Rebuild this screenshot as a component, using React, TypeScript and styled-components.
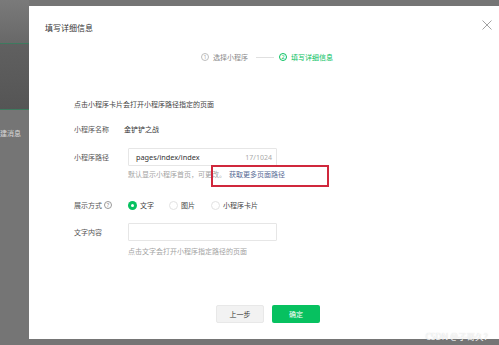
import React from "react";
import styled, { createGlobalStyle } from "styled-components";

const Global = createGlobalStyle`
  html, body {
    margin: 0;
    padding: 0;
    width: 499px;
    height: 345px;
    overflow: hidden;
    background: #757575;
    font-family: "Noto Sans CJK SC", "Noto Sans", sans-serif;
  }
  * { box-sizing: border-box; }
`;

const Page = styled.div`
  display: flex;
  width: 499px;
  height: 345px;
  position: relative;
`;

const Sidebar = styled.div`
  width: 29px;
  display: flex;
  flex-direction: column;
  flex-shrink: 0;
`;

const SideTop = styled.div`
  height: 43px;
  background: linear-gradient(#7a7a7a, #686868);
`;

const SideLine = styled.div`
  height: 1px;
  background: #3e7a5f;
`;

const SideNav = styled.div`
  height: 65px;
  background: linear-gradient(#606060, #555555);
`;

const SideItem = styled.div`
  padding-top: 18px;
  font-size: 7px;
  line-height: 10px;
  color: #d8d8d8;
  white-space: nowrap;
  overflow: hidden;
`;

const Modal = styled.div`
  flex: 1;
  margin-top: 6px;
  height: 333px;
  background: #ffffff;
  display: flex;
  flex-direction: column;
`;

const Header = styled.div`
  display: flex;
  justify-content: space-between;
  align-items: flex-start;
  padding: 16px 7px 0 16px;
  height: 28px;
`;

const Title = styled.div`
  font-size: 8px;
  line-height: 12px;
  color: #333;
`;

const Close = styled.svg`
  width: 10px;
  height: 10px;
  margin-top: -2px;
`;

const Steps = styled.div`
  display: flex;
  align-items: center;
  margin: 18px 0 0 172px;
  height: 10px;
`;

const Step = styled.div<{ $active?: boolean }>`
  display: flex;
  align-items: center;
  gap: 4px;
  font-size: 7px;
  line-height: 10px;
  color: ${(p) => (p.$active ? "#07c160" : "#8a8a8a")};
`;

const StepNum = styled.span<{ $active?: boolean }>`
  width: 8px;
  height: 8px;
  border-radius: 50%;
  border: 0.8px solid ${(p) => (p.$active ? "#07c160" : "#bdbdbd")};
  color: ${(p) => (p.$active ? "#07c160" : "#aaa")};
  font-size: 5.5px;
  line-height: 7px;
  text-align: center;
  font-family: "Noto Sans", sans-serif;
`;

const StepLine = styled.span`
  width: 18px;
  height: 1px;
  background: #e0e0e0;
  margin: 0 5px 0 8px;
`;

const Body = styled.div`
  display: flex;
  flex-direction: column;
  padding-left: 45px;
`;

const Intro = styled.div`
  margin-top: 37px;
  font-size: 7px;
  line-height: 10px;
  color: #444;
`;

const Row = styled.div<{ $mt: number }>`
  display: flex;
  align-items: center;
  margin-top: ${(p) => p.$mt}px;
`;

const Label = styled.div<{ $w: number }>`
  width: ${(p) => p.$w}px;
  flex-shrink: 0;
  display: flex;
  align-items: center;
  gap: 2px;
  font-size: 7px;
  line-height: 10px;
  color: #555;
`;

const Value = styled.div`
  font-size: 7px;
  line-height: 10px;
  color: #333;
`;

const Help = styled.span`
  width: 8px;
  height: 8px;
  border-radius: 50%;
  border: 0.8px solid #999;
  color: #888;
  font-size: 5.5px;
  line-height: 7px;
  text-align: center;
  font-family: "Noto Sans", sans-serif;
`;

const Input = styled.div`
  width: 149px;
  height: 18px;
  border: 1px solid #e6e6e6;
  border-radius: 1px;
  display: flex;
  align-items: center;
  justify-content: space-between;
  padding: 0 4px 0 7px;
  font-family: "Noto Sans", sans-serif;
`;

const InputText = styled.span`
  font-size: 7.3px;
  color: #333;
`;

const Counter = styled.span`
  font-size: 7px;
  color: #aaa;
`;

const Hint = styled.div<{ $mt: number }>`
  position: relative;
  margin: ${(p) => p.$mt}px 0 0 54px;
  font-size: 7px;
  line-height: 10px;
  color: #a3a3a3;
  white-space: nowrap;
`;

const Link = styled.span`
  color: #576b95;
  margin-left: 3px;
`;

const Annotation = styled.div`
  position: absolute;
  left: 83px;
  top: -4px;
  width: 118px;
  height: 22px;
  border: 2px solid rgb(208, 40, 60);
`;

const Radios = styled.div`
  display: flex;
  align-items: center;
`;

const RadioItem = styled.div<{ $gap: number }>`
  display: flex;
  align-items: center;
  gap: 3px;
  margin-right: ${(p) => p.$gap}px;
  font-size: 7px;
  line-height: 10px;
  color: #444;
`;

const RadioDot = styled.span<{ $on?: boolean }>`
  width: 9px;
  height: 9px;
  border-radius: 50%;
  display: flex;
  align-items: center;
  justify-content: center;
  background: ${(p) => (p.$on ? "#07c160" : "#fff")};
  border: ${(p) => (p.$on ? "none" : "0.8px solid #e2e2e2")};
  &::after {
    content: "";
    width: 3px;
    height: 3px;
    border-radius: 50%;
    background: #fff;
    display: ${(p) => (p.$on ? "block" : "none")};
  }
`;

const Footer = styled.div`
  display: flex;
  gap: 8px;
  margin: 49px 0 0 142px;
`;

const Button = styled.div<{ $primary?: boolean }>`
  width: 48px;
  height: 18px;
  border-radius: 2px;
  display: flex;
  align-items: center;
  justify-content: center;
  font-size: 7px;
  background: ${(p) => (p.$primary ? "#07c160" : "#f2f2f2")};
  color: ${(p) => (p.$primary ? "#fff" : "#333")};
  border: ${(p) => (p.$primary ? "none" : "0.8px solid #e8e8e8")};
`;

const Watermark = styled.div`
  position: absolute;
  right: 7px;
  bottom: 3px;
  font-size: 8.5px;
  line-height: 10px;
  color: rgba(255, 255, 255, 0.9);
  text-shadow: 0 0 1px rgba(150, 150, 150, 0.5);
  font-family: "Noto Sans", "Noto Sans CJK SC", sans-serif;
`;

export default function App() {
  return (
    <>
      <Global />
      <Page>
        <Sidebar>
          <SideTop />
          <SideLine />
          <SideNav />
          <SideLine />
          <SideItem>建消息</SideItem>
        </Sidebar>
        <Modal>
          <Header>
            <Title>填写详细信息</Title>
            <Close viewBox="0 0 10 10">
              <path d="M0.5 0.5 L9.5 9.5 M9.5 0.5 L0.5 9.5" stroke="#8a8a8a" strokeWidth="0.8" fill="none" />
            </Close>
          </Header>
          <Steps>
            <Step>
              <StepNum>1</StepNum>
              选择小程序
            </Step>
            <StepLine />
            <Step $active>
              <StepNum $active>2</StepNum>
              填写详细信息
            </Step>
          </Steps>
          <Body>
            <Intro>点击小程序卡片会打开小程序路径指定的页面</Intro>
            <Row $mt={15}>
              <Label $w={50}>小程序名称</Label>
              <Value>金铲铲之战</Value>
            </Row>
            <Row $mt={14}>
              <Label $w={54}>小程序路径</Label>
              <Input>
                <InputText>pages/index/index</InputText>
                <Counter>17/1024</Counter>
              </Input>
            </Row>
            <Hint $mt={3}>
              默认显示小程序首页，可更改。<Link>获取更多页面路径</Link>
              <Annotation />
            </Hint>
            <Row $mt={21}>
              <Label $w={54}>
                展示方式<Help>?</Help>
              </Label>
              <Radios>
                <RadioItem $gap={15}>
                  <RadioDot $on />
                  文字
                </RadioItem>
                <RadioItem $gap={16}>
                  <RadioDot />
                  图片
                </RadioItem>
                <RadioItem $gap={0}>
                  <RadioDot />
                  小程序卡片
                </RadioItem>
              </Radios>
            </Row>
            <Row $mt={13}>
              <Label $w={54}>文字内容</Label>
              <Input />
            </Row>
            <Hint $mt={5}>点击文字会打开小程序指定路径的页面</Hint>
            <Footer>
              <Button>上一步</Button>
              <Button $primary>确定</Button>
            </Footer>
          </Body>
        </Modal>
        <Watermark>CSDN @子哥久？</Watermark>
      </Page>
    </>
  );
}
